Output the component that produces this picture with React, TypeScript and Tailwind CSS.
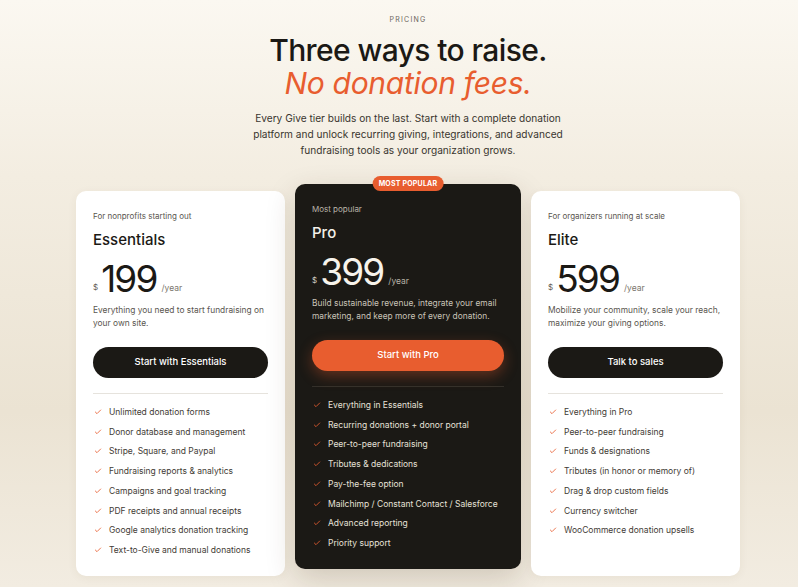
import { Check } from "lucide-react";

interface Plan {
  tagline: string;
  name: string;
  price: string;
  blurb: string;
  cta: string;
  features: string[];
  featured?: boolean;
}

const plans: Plan[] = [
  {
    tagline: "For nonprofits starting out",
    name: "Essentials",
    price: "199",
    blurb: "Everything you need to start fundraising on your own site.",
    cta: "Start with Essentials",
    features: [
      "Unlimited donation forms",
      "Donor database and management",
      "Stripe, Square, and Paypal",
      "Fundraising reports & analytics",
      "Campaigns and goal tracking",
      "PDF receipts and annual receipts",
      "Google analytics donation tracking",
      "Text-to-Give and manual donations",
    ],
  },
  {
    tagline: "Most popular",
    name: "Pro",
    price: "399",
    blurb: "Build sustainable revenue, integrate your email marketing, and keep more of every donation.",
    cta: "Start with Pro",
    featured: true,
    features: [
      "Everything in Essentials",
      "Recurring donations + donor portal",
      "Peer-to-peer fundraising",
      "Tributes & dedications",
      "Pay-the-fee option",
      "Mailchimp / Constant Contact / Salesforce",
      "Advanced reporting",
      "Priority support",
    ],
  },
  {
    tagline: "For organizers running at scale",
    name: "Elite",
    price: "599",
    blurb: "Mobilize your community, scale your reach, maximize your giving options.",
    cta: "Talk to sales",
    features: [
      "Everything in Pro",
      "Peer-to-peer fundraising",
      "Funds & designations",
      "Tributes (in honor or memory of)",
      "Drag & drop custom fields",
      "Currency switcher",
      "WooCommerce donation upsells",
    ],
  },
];

function PlanCard({ plan }: { plan: Plan }) {
  const dark = !!plan.featured;
  return (
    <div
      className={
        dark
          ? "relative w-[226px] -translate-y-[7px] rounded-[10px] bg-[#1b1915] px-[17px] pt-[20px] pb-[16px] shadow-[0_10px_30px_rgba(60,40,10,0.18)]"
          : "relative w-[209px] rounded-[10px] bg-white px-[17px] pt-[20px] pb-[16px] shadow-[0_2px_10px_rgba(80,60,20,0.06)]"
      }
    >
      {dark && (
        <div className="absolute left-1/2 top-[-8px] -translate-x-1/2 rounded-full bg-[#e85d2f] px-[6px] py-[3px] text-[7px] font-bold leading-[9px] tracking-[0.03em] text-white whitespace-nowrap">
          MOST POPULAR
        </div>
      )}
      <p className={`text-[8px] leading-[10px] ${dark ? "text-[#b9b3a8]" : "text-[#5a564f]"}`}>{plan.tagline}</p>
      <h3 className={`mt-[10px] text-[15px] leading-[18px] font-medium ${dark ? "text-[#f4f0e8]" : "text-[#1b1915]"}`}>
        {plan.name}
      </h3>
      <div className="mt-[11px] flex items-end">
        <span className={`mb-[5px] text-[8px] leading-[10px] ${dark ? "text-[#d8d2c8]" : "text-[#5a564f]"}`}>$</span>
        <span className={`ml-[3px] text-[37px] leading-[37px] tracking-[-0.05em] ${dark ? "text-[#f7f3eb]" : "text-[#1b1915]"}`}>
          {plan.price}
        </span>
        <span className={`ml-[5px] mb-[4px] text-[8.5px] leading-[10px] ${dark ? "text-[#b9b3a8]" : "text-[#7a756c]"}`}>/year</span>
      </div>
      <p className={`mt-[7px] text-[8.4px] leading-[13px] ${dark ? "text-[#c9c3b8]" : "text-[#5a564f]"}`}>{plan.blurb}</p>
      <button
        className={
          dark
            ? "mt-[17px] h-[31px] w-full rounded-full bg-[#e85d2f] text-[9.5px] font-medium text-white shadow-[0_5px_14px_rgba(232,93,47,0.35)]"
            : "mt-[17px] h-[31px] w-full rounded-full bg-[#1b1915] text-[9.5px] font-medium text-white"
        }
      >
        {plan.cta}
      </button>
      <div className={`mt-[15px] h-px w-full ${dark ? "bg-[#34312b]" : "bg-[#e6e3dd]"}`} />
      <ul className="mt-[8px] flex flex-col">
        {plan.features.map((f) => (
          <li key={f} className="flex h-[19.75px] items-center gap-[7px]">
            <Check size={8} strokeWidth={2.5} className="ml-[1px] shrink-0 text-[#e85d2f]" />
            <span className={`text-[8.5px] leading-[10px] ${dark ? "text-[#e6e1d8]" : "text-[#3f3b35]"}`}>{f}</span>
          </li>
        ))}
      </ul>
    </div>
  );
}

export default function App() {
  return (
    <div
      className="min-h-[587px] w-full bg-[linear-gradient(180deg,#fbf8f1_0%,#f3ede1_30%,#ebe3d3_70%,#f2ece1_100%)] pl-[18px]"
      style={{ fontFamily: "Inter, 'Noto Sans', sans-serif" }}
    >
      <div className="flex flex-col items-center pt-[15px]">
        <p className="text-[7px] leading-[9px] tracking-[0.18em] text-[#6b665d]">PRICING</p>
        <h1 className="mt-[10px] text-center text-[30px] leading-[33px] font-medium tracking-[-0.02em] text-[#1b1915]">
          Three ways to raise.
          <br />
          <span className="italic font-normal tracking-[-0.01em] text-[#e85d2f]">No donation fees.</span>
        </h1>
        <p className="mt-[10px] w-[314px] text-center text-[10.15px] leading-[16px] text-[#3a362f]">
          Every Give tier builds on the last. Start with a complete donation platform and unlock recurring giving,
          integrations, and advanced fundraising tools as your organization grows.
        </p>
      </div>
      <div className="mt-[33px] flex items-stretch justify-center gap-[10px]">
        {plans.map((p) => (
          <PlanCard key={p.name} plan={p} />
        ))}
      </div>
    </div>
  );
}
